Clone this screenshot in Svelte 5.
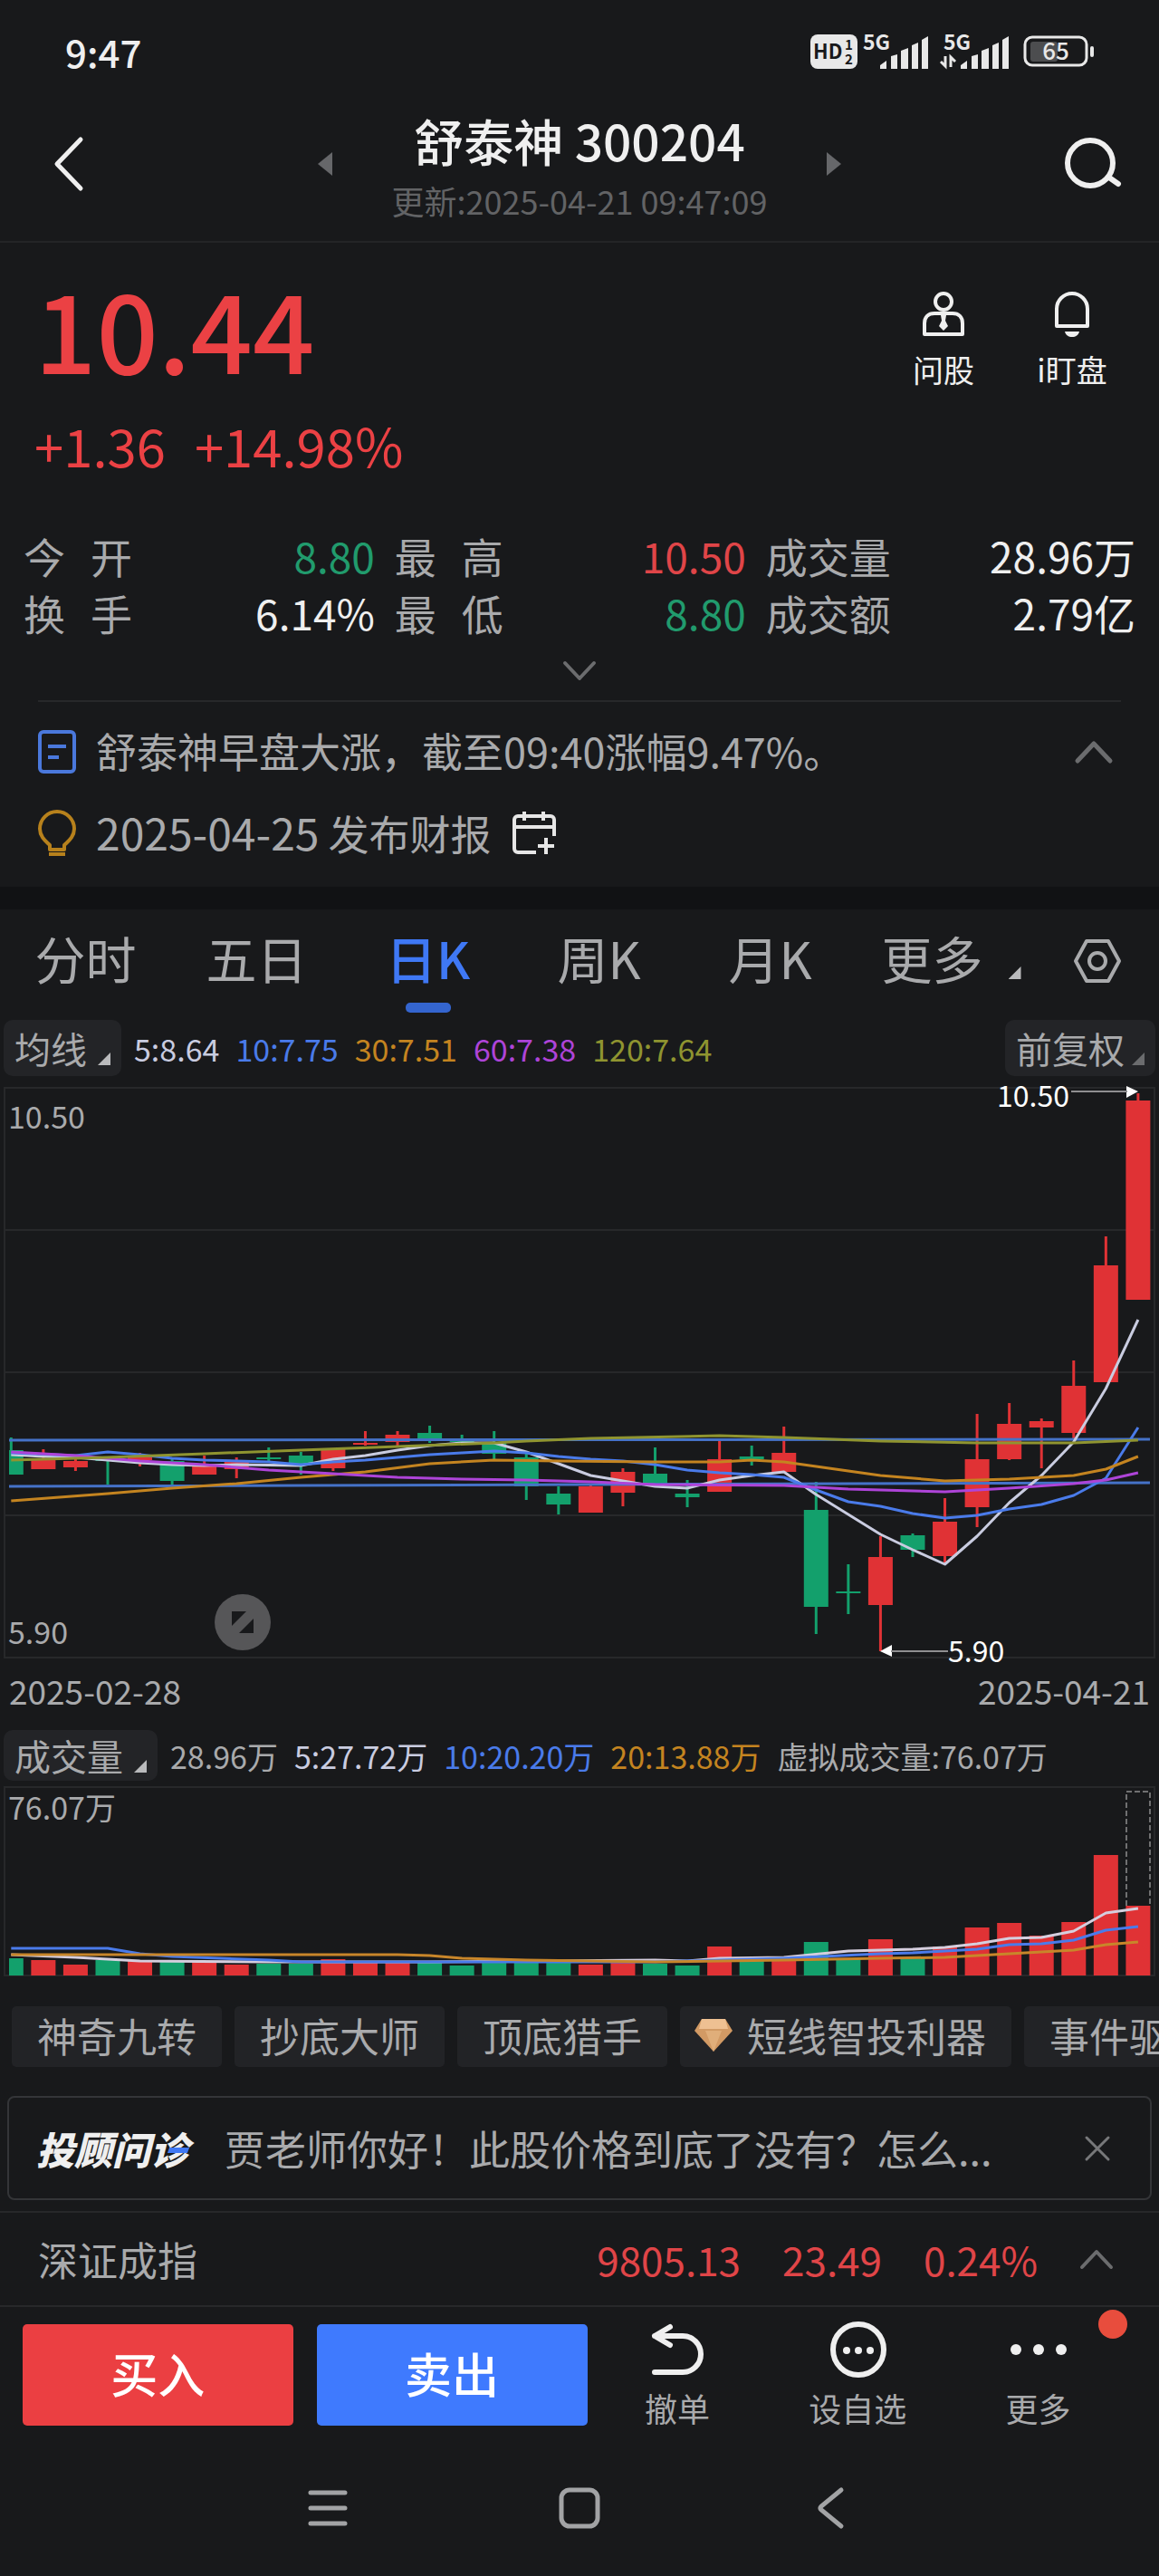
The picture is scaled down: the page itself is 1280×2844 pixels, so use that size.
<script lang="ts">
	type Point = [number, number];
	type Candle = [string, number, number, number, number];

	interface Line {
		color: string;
		points: Point[];
	}

	const STEP = 35.56;
	const FIRST_X = 12.3;
	const BAR_WIDTH = 27;
	const VOLUME_BASE = 209;

	const RED = '#e03235';
	const GREEN = '#13a06c';

	const stats = [
		{ label: '今开', value: '8.80', tone: 'down' },
		{ label: '最高', value: '10.50', tone: 'up' },
		{ label: '成交量', value: '28.96万', tone: '' },
		{ label: '换手', value: '6.14%', tone: '' },
		{ label: '最低', value: '8.80', tone: 'down' },
		{ label: '成交额', value: '2.79亿', tone: '' }
	];

	const tabs = ['分时', '五日', '日K', '周K', '月K', '更多'];
	let activeTab = '日K';

	const averages = [
		{ text: '5:8.64', tone: 'pale' },
		{ text: '10:7.75', tone: 'blue' },
		{ text: '30:7.51', tone: 'orange' },
		{ text: '60:7.38', tone: 'purple' },
		{ text: '120:7.64', tone: 'olive' }
	];

	const volumeAverages = [
		{ text: '28.96万', tone: '' },
		{ text: '5:27.72万', tone: 'pale' },
		{ text: '10:20.20万', tone: 'blue' },
		{ text: '20:13.88万', tone: 'orange' },
		{ text: '虚拟成交量:76.07万', tone: '' }
	];

	// colour, high, body top, body bottom, low
	const candles: Candle[] = [
		['g', 387, 401, 428, 428],
		['r', 400, 412, 422, 422],
		['r', 411, 413, 420, 424],
		['g', 410, 411, 413, 439],
		['r', 404, 408, 412, 419],
		['g', 409, 413, 435, 439],
		['r', 407, 417, 428, 428],
		['r', 409, 414, 422, 432],
		['g', 398, 409, 411, 415],
		['g', 403, 407, 417, 428],
		['r', 399, 400, 421, 424],
		['r', 380, 393, 395, 396],
		['r', 380, 384, 392, 397],
		['g', 374, 382, 391, 393],
		['g', 384, 388, 392, 392],
		['g', 380, 392, 405, 411],
		['g', 404, 409, 441, 456],
		['g', 441, 449, 461, 472],
		['r', 439, 441, 470, 470],
		['r', 421, 425, 448, 463],
		['g', 398, 427, 439, 439],
		['g', 434, 449, 453, 464],
		['r', 388, 411, 447, 447],
		['g', 396, 408, 411, 418],
		['r', 375, 404, 425, 425],
		['g', 436, 467, 574, 604],
		['g', 527, 557, 559, 582],
		['r', 496, 519, 572, 623],
		['g', 493, 495, 511, 519],
		['r', 454, 480, 518, 526],
		['r', 361, 411, 464, 486],
		['r', 349, 372, 411, 412],
		['r', 366, 369, 376, 421],
		['r', 302, 330, 382, 390],
		['r', 165, 197, 326, 326],
		['r', 7, 15, 235, 235]
	];

	const volumes = [
		190, 192, 197, 192, 193, 194, 194, 197, 196, 196, 191, 195, 195, 195, 198, 195, 194, 195,
		197, 195, 196, 198, 177, 193, 192, 172, 190, 169, 190, 177, 156, 151, 165, 150, 76, 132
	];

	const priceLines: Line[] = [
		{
			color: '#c9cce0',
			points: [
				[0, 406], [1, 408], [2, 409], [3, 412], [4, 415], [5, 417], [6, 418], [7, 417], [9, 418],
				[10, 411], [11, 407], [12, 401], [13, 396], [14, 393], [15, 393], [16, 403], [17, 416],
				[18, 429], [19, 435], [20, 441], [21, 443], [22, 434], [23, 429], [24, 425], [25, 450],
				[26, 472], [27, 494], [28, 511], [29, 527], [30, 496], [31, 459], [32, 429], [33, 392],
				[34, 333], [35, 257]
			]
		},
		{
			color: '#4a7bea',
			points: [
				[0, 404], [2, 407], [3, 403], [4, 406], [5, 410], [6, 412], [7, 413], [8, 414], [9, 417],
				[10, 414], [11, 412], [12, 409], [13, 406], [14, 404], [15, 402], [16, 404], [17, 408],
				[18, 411], [19, 413], [20, 417], [21, 423], [22, 426], [23, 428], [24, 431], [25, 445],
				[26, 458], [27, 463], [28, 471], [29, 476], [30, 473], [31, 466], [32, 461], [33, 451],
				[34, 432], [35, 376]
			]
		},
		{
			color: '#c48420',
			points: [
				[0, 457], [3, 449], [5, 443], [7, 438], [9, 431], [11, 425], [13, 416], [15, 412],
				[17, 413], [20, 414], [22, 414], [23, 412], [24, 414], [25, 419], [26, 424], [27, 429],
				[29, 435], [31, 433], [33, 429], [34, 422], [35, 408]
			]
		},
		{
			color: '#ae44d8',
			points: [
				[0, 403], [2, 407], [4, 413], [6, 417], [8, 423], [10, 427], [12, 431], [14, 433],
				[16, 434], [18, 436], [20, 439], [24, 440], [26, 444], [29, 447], [31, 443], [33, 438],
				[34, 434], [35, 426]
			]
		},
		{
			color: '#8f9430',
			points: [
				[0, 412], [3, 409], [6, 405], [9, 401], [12, 397], [15, 393], [16, 391], [18, 388],
				[22, 385], [24, 387], [27, 391], [30, 393], [33, 393], [35, 390]
			]
		}
	];

	const volumeLines: Line[] = [
		{
			color: '#d5cede',
			points: [
				[0, 186], [2, 189], [4, 193], [8, 194], [13, 194], [20, 192], [21, 193], [22, 190],
				[24, 189], [26, 182], [28, 180], [29, 178], [30, 174], [31, 168], [32, 167], [33, 160],
				[34, 140], [35, 135]
			]
		},
		{
			color: '#4a7bea',
			points: [
				[0, 179], [3, 179], [4, 185], [5, 188], [8, 192], [9, 194], [20, 194], [22, 192],
				[24, 190], [27, 185], [28, 184], [29, 182], [30, 180], [31, 175], [32, 174], [33, 170],
				[34, 159], [35, 155]
			]
		},
		{
			color: '#c8862a',
			points: [
				[0, 186], [12, 186], [13, 187], [14, 190], [16, 192], [20, 194], [24, 192], [27, 190],
				[29, 189], [30, 187], [31, 185], [32, 183], [33, 181], [34, 175], [35, 172]
			]
		}
	];

	const tools = ['神奇九转', '抄底大师', '顶底猎手'];

	let showAdvisor = true;

	function x(i: number) {
		return FIRST_X + i * STEP;
	}

	// the first bar is cut off by the frame
	function barLeft(i: number) {
		return Math.max(10, x(i) - BAR_WIDTH / 2);
	}

	function barWidth(i: number) {
		return x(i) + BAR_WIDTH / 2 - barLeft(i);
	}

	function fill(kind: string) {
		return kind === 'r' ? RED : GREEN;
	}

	function toPoints(points: Point[]) {
		return points.map(([i, y]) => `${x(i)},${y}`).join(' ');
	}
</script>

<div class="app">
	<div class="status">
		<span class="clock">9:47</span>
		<div class="status-icons">
			<svg width="52" height="38" viewBox="0 0 52 38">
				<rect width="52" height="38" rx="8" fill="#e8e8e8" />
				<text x="3" y="27" font-size="22" font-weight="700" fill="#18191b">HD</text>
				<text x="38" y="17" font-size="15" font-weight="700" fill="#18191b">1</text>
				<text x="38" y="33" font-size="15" font-weight="700" fill="#18191b">2</text>
			</svg>
			<svg width="81" height="38" viewBox="0 0 81 38" fill="#e8e8e8">
				<text x="1" y="17" font-size="23" font-weight="700">5G</text>
				<path d="M20 34l7-5v9h-7zM32 24l7-2v16h-7zM43 18l8-3v23h-8zM55 12l7-3v29h-7zM66 6l7-4v36h-7z" />
			</svg>
			<svg width="87" height="38" viewBox="0 0 87 38" fill="#e8e8e8">
				<text x="4" y="17" font-size="23" font-weight="700">5G</text>
				<path d="M23 34l7-5v9h-7zM35 24l7-2v16h-7zM46 18l8-3v23h-8zM58 12l7-3v29h-7zM69 6l7-4v36h-7z" />
				<path d="M6 24v11l-5-5M12 36v-11l5 5" fill="none" stroke="#e8e8e8" stroke-width="3" />
			</svg>
			<svg width="80" height="36" viewBox="0 0 80 36">
				<rect x="8" y="7" width="30" height="22" rx="3" fill="#4c4d4f" />
				<rect x="2" y="2" width="68" height="31" rx="8" fill="none" stroke="#e8e8e8" stroke-width="3" />
				<rect x="74" y="12" width="4" height="12" rx="2" fill="#e8e8e8" />
				<text x="36" y="27" font-size="26" font-weight="500" text-anchor="middle" fill="#e8e8e8">65</text>
			</svg>
		</div>
	</div>

	<header class="header">
		<button class="icon-button back" aria-label="返回">
			<svg width="36" height="62" viewBox="0 0 36 62">
				<path d="M31 4L5 31l26 27" fill="none" stroke="#efefef" stroke-width="5" stroke-linecap="round" stroke-linejoin="round" />
			</svg>
		</button>
		<div class="stock">
			<button class="icon-button" aria-label="上一只">
				<svg width="16" height="26" viewBox="0 0 16 26"><path d="M16 0v26L0 13z" fill="#66676a" /></svg>
			</button>
			<div class="title">
				<h1>舒泰神 300204</h1>
				<p>更新:2025-04-21 09:47:09</p>
			</div>
			<button class="icon-button" aria-label="下一只">
				<svg width="16" height="26" viewBox="0 0 16 26"><path d="M0 0v26l16-13z" fill="#66676a" /></svg>
			</button>
		</div>
		<button class="icon-button search" aria-label="搜索">
			<svg width="66" height="60" viewBox="0 0 66 60" fill="none" stroke="#efefef" stroke-width="6" stroke-linecap="round">
				<circle cx="28" cy="29" r="25" />
				<path d="M49 45l10 7" />
			</svg>
		</button>
	</header>

	<section class="quote">
		<div class="quote-top">
			<div>
				<div class="price">10.44</div>
				<div class="change"><span>+1.36</span><span>+14.98%</span></div>
			</div>
			<div class="shortcuts">
				<button>
					<svg width="48" height="52" viewBox="0 0 48 52" fill="none" stroke="#efefef" stroke-width="4">
						<circle cx="24" cy="12" r="9" />
						<path d="M3 48V36c0-7 4-11 11-11h20c7 0 11 4 11 11v12z" stroke-linejoin="round" />
						<path d="M21 27h6l-1 6 3 6-5 5-5-5 3-6z" fill="#efefef" stroke="none" />
					</svg>
					<span>问股</span>
				</button>
				<button>
					<svg width="48" height="52" viewBox="0 0 48 52" fill="none" stroke="#efefef" stroke-width="4">
						<path d="M7 39V20a17 17 0 0 1 34 0v19z" stroke-linejoin="round" />
						<path d="M16 45h16c-1 4-4 6-8 6s-7-2-8-6z" fill="#efefef" stroke="none" />
					</svg>
					<span>i盯盘</span>
				</button>
			</div>
		</div>

		<dl class="stats">
			{#each stats as stat}
				<div class="stat">
					<dt>
						{#each [...stat.label] as char}<span>{char}</span>{/each}
					</dt>
					<dd class={stat.tone}>{stat.value}</dd>
				</div>
			{/each}
		</dl>

		<button class="expand" aria-label="展开">
			<svg width="38" height="22" viewBox="0 0 38 22">
				<path d="M3 2l16 17L35 2" fill="none" stroke="#6b6c6e" stroke-width="4" stroke-linecap="round" stroke-linejoin="round" />
			</svg>
		</button>

		<div class="news">
			<div class="news-row">
				<svg width="42" height="48" viewBox="0 0 42 48" fill="none" stroke="#4a78dc" stroke-width="4">
					<rect x="2" y="2" width="38" height="44" rx="4" />
					<path d="M11 18h20M11 30h12" />
				</svg>
				<span class="news-text">舒泰神早盘大涨，截至09:40涨幅9.47%。</span>
				<button class="icon-button" aria-label="收起">
					<svg width="44" height="24" viewBox="0 0 44 24">
						<path d="M4 22L22 3l18 19" fill="none" stroke="#6b6c6e" stroke-width="5" stroke-linecap="round" stroke-linejoin="round" />
					</svg>
				</button>
			</div>
			<div class="news-row">
				<svg width="42" height="50" viewBox="0 0 42 50" fill="none" stroke="#b7811c" stroke-width="4">
					<path d="M13 43v-5C9 34 2 29 2 20a19 19 0 0 1 38 0c0 9-7 14-11 18v5z" stroke-linejoin="round" />
					<path d="M12 48h18" />
				</svg>
				<span class="news-date"><time datetime="2025-04-25">2025-04-25</time> 发布财报</span>
				<button class="icon-button" aria-label="添加到日历">
					<svg width="48" height="50" viewBox="0 0 48 50" fill="none" stroke="#e6e6e6" stroke-width="4">
						<path d="M27 46H7a4 4 0 0 1-4-4V10a4 4 0 0 1 4-4h36a4 4 0 0 1 4 4v18M3 18h44M14 1v10M35 1v10M38 30v18M29 39h18" />
					</svg>
				</button>
			</div>
		</div>
	</section>

	<nav class="tabs">
		<div class="tab-list">
			{#each tabs as tab}
				<button class="tab" class:active={tab === activeTab} on:click={() => (activeTab = tab)}>
					{tab}{#if tab === '更多'}<i class="corner"></i>{/if}
				</button>
			{/each}
		</div>
		<button class="icon-button settings" aria-label="设置">
			<svg width="54" height="50" viewBox="0 0 54 50" fill="none" stroke="#a9aaac" stroke-width="4" stroke-linejoin="round">
				<path d="M15 3h24l12 22-12 22H15L3 25z" />
				<circle cx="27" cy="25" r="9" />
			</svg>
		</button>
	</nav>

	<div class="legend">
		<label class="picker">
			<select aria-label="主图指标"><option>均线</option></select>
			<i class="corner"></i>
		</label>
		<div class="values">
			{#each averages as item}<span class={item.tone}>{item.text}</span>{/each}
		</div>
		<label class="picker dim">
			<select aria-label="复权方式"><option>前复权</option></select>
			<i class="corner"></i>
		</label>
	</div>

	<div class="price-chart">
		<svg viewBox="0 0 1280 632">
			<g stroke="#27282a" stroke-width="2" fill="none">
				<rect x="5" y="1" width="1270" height="629" />
				<path d="M5 158h1270M5 315h1270M5 473h1270" />
			</g>
			{#each candles as [kind, high, top, bottom, low], i}
				<rect x={x(i) - 1.5} y={high} width="3" height={low - high} fill={fill(kind)} />
				<rect x={barLeft(i)} y={top} width={barWidth(i)} height={bottom - top} fill={fill(kind)} />
			{/each}
			<path d="M10 390L1270 389M10 441L1270 437" stroke="#4572c8" stroke-width="3" />
			{#each priceLines as line}
				<polyline points={toPoints(line.points)} fill="none" stroke={line.color} stroke-width="3" stroke-linejoin="round" />
			{/each}
			<g fill="#a9aaac" font-size="34">
				<text x="9" y="46">10.50</text>
				<text x="9" y="615">5.90</text>
			</g>
			<g fill="#ffffff" font-size="32">
				<text x="1181" y="22" text-anchor="end">10.50</text>
				<text x="1047" y="635">5.90</text>
				<path d="M1244 -1l13 6-13 7zM985 616l-13 7 13 6z" />
			</g>
			<path d="M1183 5h62M984 623h63" stroke="#8f8f91" stroke-width="2" />
		</svg>
		<button class="fullscreen" aria-label="全屏">
			<svg width="26" height="26" viewBox="0 0 26 26" fill="#18191b">
				<path d="M1 1h16L1 17zM25 9v16H9z" />
			</svg>
		</button>
	</div>

	<div class="dates"><span>2025-02-28</span><span>2025-04-21</span></div>

	<div class="legend volume-legend">
		<label class="picker">
			<select aria-label="副图指标"><option>成交量</option></select>
			<i class="corner"></i>
		</label>
		<div class="values">
			{#each volumeAverages as item}<span class={item.tone}>{item.text}</span>{/each}
		</div>
	</div>

	<svg class="volume-chart" viewBox="0 0 1280 210">
		<rect x="5" y="1" width="1270" height="208" fill="none" stroke="#27282a" stroke-width="2" />
		{#each volumes as top, i}
			<rect x={barLeft(i)} y={top} width={barWidth(i)} height={VOLUME_BASE - top} fill={fill(candles[i][0])} />
		{/each}
		<path d="M1244 132V6h26v126" fill="none" stroke="#c8c8c8" stroke-width="1" stroke-dasharray="6 3" />
		{#each volumeLines as line}
			<polyline points={toPoints(line.points)} fill="none" stroke={line.color} stroke-width="3" stroke-linejoin="round" />
		{/each}
		<text x="9" y="37" fill="#a9aaac" font-size="34">76.07万</text>
	</svg>

	<div class="tools">
		{#each tools as tool}
			<button>{tool}</button>
		{/each}
		<button class="premium">
			<svg width="42" height="36" viewBox="0 0 42 36">
				<path d="M8 0h26l8 13-21 23L0 13z" fill="#d29a64" />
				<path d="M8 0h26l3 11H5z" fill="#eec092" />
				<path d="M12 13h18l-9 23z" fill="#e0ae7a" />
			</svg>
			短线智投利器
		</button>
		<button>事件驱动</button>
	</div>

	{#if showAdvisor}
		<div class="advisor">
			<strong class="advisor-logo">投顾问诊</strong>
			<span class="advisor-text">贾老师你好！此股价格到底了没有？怎么...</span>
			<button class="icon-button" aria-label="关闭" on:click={() => (showAdvisor = false)}>
				<svg width="28" height="28" viewBox="0 0 28 28">
					<path d="M2 2l24 24M26 2L2 26" stroke="#77787a" stroke-width="3" stroke-linecap="round" />
				</svg>
			</button>
		</div>
	{/if}

	<div class="index">
		<span class="index-name">深证成指</span>
		<span>9805.13</span>
		<span>23.49</span>
		<span>0.24%</span>
		<button class="icon-button" aria-label="展开指数">
			<svg width="38" height="22" viewBox="0 0 38 22">
				<path d="M3 20L19 3l16 17" fill="none" stroke="#6b6c6e" stroke-width="4" stroke-linecap="round" stroke-linejoin="round" />
			</svg>
		</button>
	</div>

	<footer class="trade">
		<button class="order buy">买入</button>
		<button class="order sell">卖出</button>
		<div class="actions">
			<button>
				<svg width="64" height="60" viewBox="0 0 64 60" fill="none" stroke="#efefef" stroke-width="6" stroke-linecap="round" stroke-linejoin="round">
					<path d="M24 3L7 13l17 10M7 13h31a20 20 0 0 1 0 40H7" />
				</svg>
				<span>撤单</span>
			</button>
			<button>
				<svg width="64" height="60" viewBox="0 0 64 60" fill="#efefef">
					<circle cx="33" cy="28" r="28" fill="none" stroke="#efefef" stroke-width="6" />
					<circle cx="20" cy="29" r="4" />
					<circle cx="33" cy="29" r="4" />
					<circle cx="46" cy="29" r="4" />
				</svg>
				<span>设自选</span>
			</button>
			<button>
				<svg width="64" height="60" viewBox="0 0 64 60" fill="#efefef">
					<circle cx="8" cy="28" r="6" />
					<circle cx="33" cy="28" r="6" />
					<circle cx="58" cy="28" r="6" />
				</svg>
				<span>更多</span>
				<i class="badge"></i>
			</button>
		</div>
	</footer>

	<nav class="system-nav">
		<button class="icon-button" aria-label="最近任务">
			<svg width="48" height="48" viewBox="0 0 48 48">
				<path d="M5 7h38M5 24h38M5 41h38" stroke="#a2a3a5" stroke-width="5" stroke-linecap="round" />
			</svg>
		</button>
		<button class="icon-button" aria-label="主屏幕">
			<svg width="48" height="48" viewBox="0 0 48 48">
				<rect x="4" y="4" width="40" height="40" rx="9" fill="none" stroke="#a2a3a5" stroke-width="5" />
			</svg>
		</button>
		<button class="icon-button" aria-label="返回上一页">
			<svg width="48" height="48" viewBox="0 0 48 48">
				<path d="M35 4L13 22q-2 2 0 4l22 18" fill="none" stroke="#a2a3a5" stroke-width="5" stroke-linecap="round" />
			</svg>
		</button>
	</nav>
</div>

<style>
	:global(body) {
		margin: 0;
		background: #18191b;
	}

	.app {
		overflow: hidden;
		background: #18191b;
		color: #a9aaac;
		font-family: 'Noto Sans CJK SC', sans-serif;
	}

	button,
	select {
		margin: 0;
		padding: 0;
		border: none;
		background: none;
		color: inherit;
		font: inherit;
		white-space: nowrap;
		cursor: pointer;
	}

	svg {
		display: block;
		flex-shrink: 0;
		overflow: visible;
	}

	.icon-button {
		display: flex;
		align-items: center;
		justify-content: center;
	}

	.status {
		display: flex;
		align-items: center;
		justify-content: space-between;
		height: 114px;
		padding: 0 70px 0 72px;
	}

	.clock {
		color: #efefef;
		font-size: 42px;
		font-weight: 500;
		line-height: 60px;
	}

	.status-icons {
		display: flex;
		align-items: center;
		gap: 5px;
	}

	.header {
		display: grid;
		grid-template-columns: 1fr auto 1fr;
		align-items: center;
		padding: 0 38px 18px;
		border-bottom: 2px solid #242527;
	}

	.back {
		justify-self: start;
		padding-left: 20px;
	}

	.search {
		justify-self: end;
	}

	.stock {
		display: flex;
		align-items: center;
		gap: 66px;
	}

	.title {
		text-align: center;
	}

	h1 {
		margin: 0;
		color: #efefef;
		font-size: 55px;
		font-weight: 500;
		line-height: 80px;
	}

	.title p {
		margin: 0;
		color: #626365;
		font-size: 36px;
		line-height: 54px;
	}

	.quote {
		padding-top: 23px;
		padding-bottom: 14px;
		border-bottom: 25px solid #111214;
	}

	.quote-top {
		display: flex;
		justify-content: space-between;
		padding: 0 40px 0 38px;
		color: #eb4144;
	}

	.price {
		font-size: 120px;
		font-weight: 500;
		line-height: 140px;
	}

	.change {
		display: flex;
		gap: 32px;
		margin-top: 20px;
		font-size: 58px;
		line-height: 80px;
	}

	.shortcuts {
		display: flex;
		gap: 30px;
		padding-top: 30px;
	}

	.shortcuts button {
		display: flex;
		flex-direction: column;
		align-items: center;
		gap: 10px;
		width: 112px;
		color: #efefef;
		font-size: 34px;
		line-height: 50px;
	}

	.stats {
		display: grid;
		grid-template-columns: 38fr 38fr 40fr;
		column-gap: 22px;
		margin: 51px 0 0;
		padding: 0 26px;
	}

	.stat {
		display: flex;
		justify-content: space-between;
		font-size: 46px;
		line-height: 63px;
	}

	dt {
		display: flex;
		justify-content: space-between;
		min-width: 120px;
	}

	dd {
		margin: 0;
		color: #efefef;
	}

	.stat .up {
		color: #e04548;
	}

	.stat .down {
		color: #219b6d;
	}

	.expand {
		display: flex;
		align-items: center;
		justify-content: center;
		width: 100%;
		height: 65px;
	}

	.news {
		margin: 0 42px;
		padding-top: 10px;
		border-top: 2px solid #27282a;
	}

	.news-row {
		display: flex;
		align-items: center;
		height: 90px;
		gap: 22px;
		padding-right: 8px;
		font-size: 45px;
		white-space: nowrap;
	}

	.news-text,
	.news-date {
		padding-bottom: 4px;
	}

	.news-text {
		flex: 1;
	}

	time {
		font-size: 48px;
	}

	.tabs {
		display: flex;
		height: 118px;
	}

	.tab-list {
		display: grid;
		grid-template-columns: repeat(6, 1fr);
		flex: 1;
	}

	.tab {
		position: relative;
		display: flex;
		align-items: baseline;
		justify-content: center;
		gap: 28px;
		font-size: 56px;
		line-height: 106px;
	}

	.tab:last-child {
		padding-left: 22px;
	}

	.tab.active {
		color: #3f78f5;
		font-weight: 500;
	}

	.tab.active::after {
		content: '';
		position: absolute;
		bottom: 4px;
		left: 50%;
		width: 50px;
		height: 11px;
		margin-left: -25px;
		border-radius: 5px;
		background: #3465cf;
	}

	.settings {
		width: 146px;
		height: 114px;
		padding-left: 10px;
	}

	.corner {
		flex-shrink: 0;
		width: 14px;
		height: 14px;
		background: #b9babc;
		clip-path: polygon(100% 0, 100% 100%, 0 100%);
	}

	.legend {
		display: flex;
		align-items: center;
		gap: 14px;
		margin: 4px 4px 12px;
		font-size: 34px;
	}

	.picker {
		display: flex;
		align-items: center;
		gap: 12px;
		height: 62px;
		padding: 0 12px;
		border-radius: 10px;
		background: #232427;
		font-size: 40px;
	}

	.picker select {
		appearance: none;
		outline: none;
	}

	.picker .corner {
		margin-top: 24px;
	}

	.dim {
		gap: 8px;
	}

	.dim .corner {
		background: #6b6c6e;
	}

	.values {
		display: flex;
		flex: 1;
		gap: 18px;
		white-space: nowrap;
	}

	.pale {
		color: #c9cce0;
	}

	.blue {
		color: #4a7bea;
	}

	.orange {
		color: #c48420;
	}

	.purple {
		color: #ae44d8;
	}

	.olive {
		color: #8f9430;
	}

	.price-chart {
		position: relative;
	}

	.price-chart > svg,
	.volume-chart {
		width: 100%;
	}

	.fullscreen {
		position: absolute;
		bottom: 10px;
		left: 237px;
		display: flex;
		align-items: center;
		justify-content: center;
		width: 62px;
		height: 62px;
		border-radius: 50%;
		background: #565658;
	}

	.dates {
		display: flex;
		justify-content: space-between;
		padding: 6px 10px 0;
		font-size: 37px;
		line-height: 56px;
	}

	.volume-legend {
		margin: 16px 4px 6px;
	}

	.volume-legend .picker {
		height: 56px;
	}

	.tools {
		display: flex;
		gap: 14px;
		margin-top: 33px;
		padding-left: 13px;
		overflow: hidden;
	}

	.tools button {
		display: flex;
		flex-shrink: 0;
		align-items: center;
		gap: 16px;
		height: 67px;
		padding: 0 28px 4px;
		border-radius: 5px;
		background: #222326;
		font-size: 44px;
		line-height: 60px;
	}

	.tools .premium {
		padding-left: 16px;
	}

	.advisor {
		display: flex;
		align-items: center;
		height: 111px;
		margin: 32px 8px 12px;
		padding: 0 44px 0 30px;
		border: 2px solid #343538;
		border-radius: 8px;
		font-size: 45px;
		white-space: nowrap;
	}

	.advisor-logo {
		position: relative;
		color: #efefef;
		font-size: 42px;
		font-style: italic;
		font-weight: 900;
	}

	.advisor-logo::after {
		content: '';
		position: absolute;
		right: 0;
		top: 30px;
		width: 22px;
		height: 6px;
		background: #3f78f5;
		transform: skewX(-20deg);
	}

	.advisor-text {
		flex: 1;
		margin-left: 40px;
	}

	.index {
		display: flex;
		align-items: center;
		gap: 46px;
		height: 102px;
		padding: 0 50px 0 42px;
		border-top: 2px solid #27282a;
		border-bottom: 2px solid #27282a;
		color: #e04548;
		font-size: 44px;
	}

	.index-name {
		flex: 1;
		color: #a9aaac;
	}

	.trade {
		display: flex;
		align-items: flex-start;
		gap: 26px;
		padding: 19px 34px 14px 25px;
	}

	.order {
		flex: 1;
		height: 112px;
		padding-bottom: 6px;
		border-radius: 5px;
		color: #ffffff;
		font-size: 52px;
		font-weight: 500;
	}

	.buy {
		background: #eb3f42;
	}

	.sell {
		background: #3f7afe;
	}

	.actions {
		display: grid;
		grid-template-columns: repeat(3, 1fr);
		flex: 2;
		margin-left: -26px;
	}

	.actions button {
		position: relative;
		display: flex;
		flex-direction: column;
		align-items: center;
		gap: 8px;
		font-size: 36px;
		line-height: 48px;
	}

	.badge {
		position: absolute;
		top: -16px;
		right: 1px;
		width: 32px;
		height: 32px;
		border-radius: 50%;
		background: #e84d3d;
	}

	.system-nav {
		display: flex;
		align-items: center;
		justify-content: center;
		gap: 230px;
		height: 146px;
	}
</style>
